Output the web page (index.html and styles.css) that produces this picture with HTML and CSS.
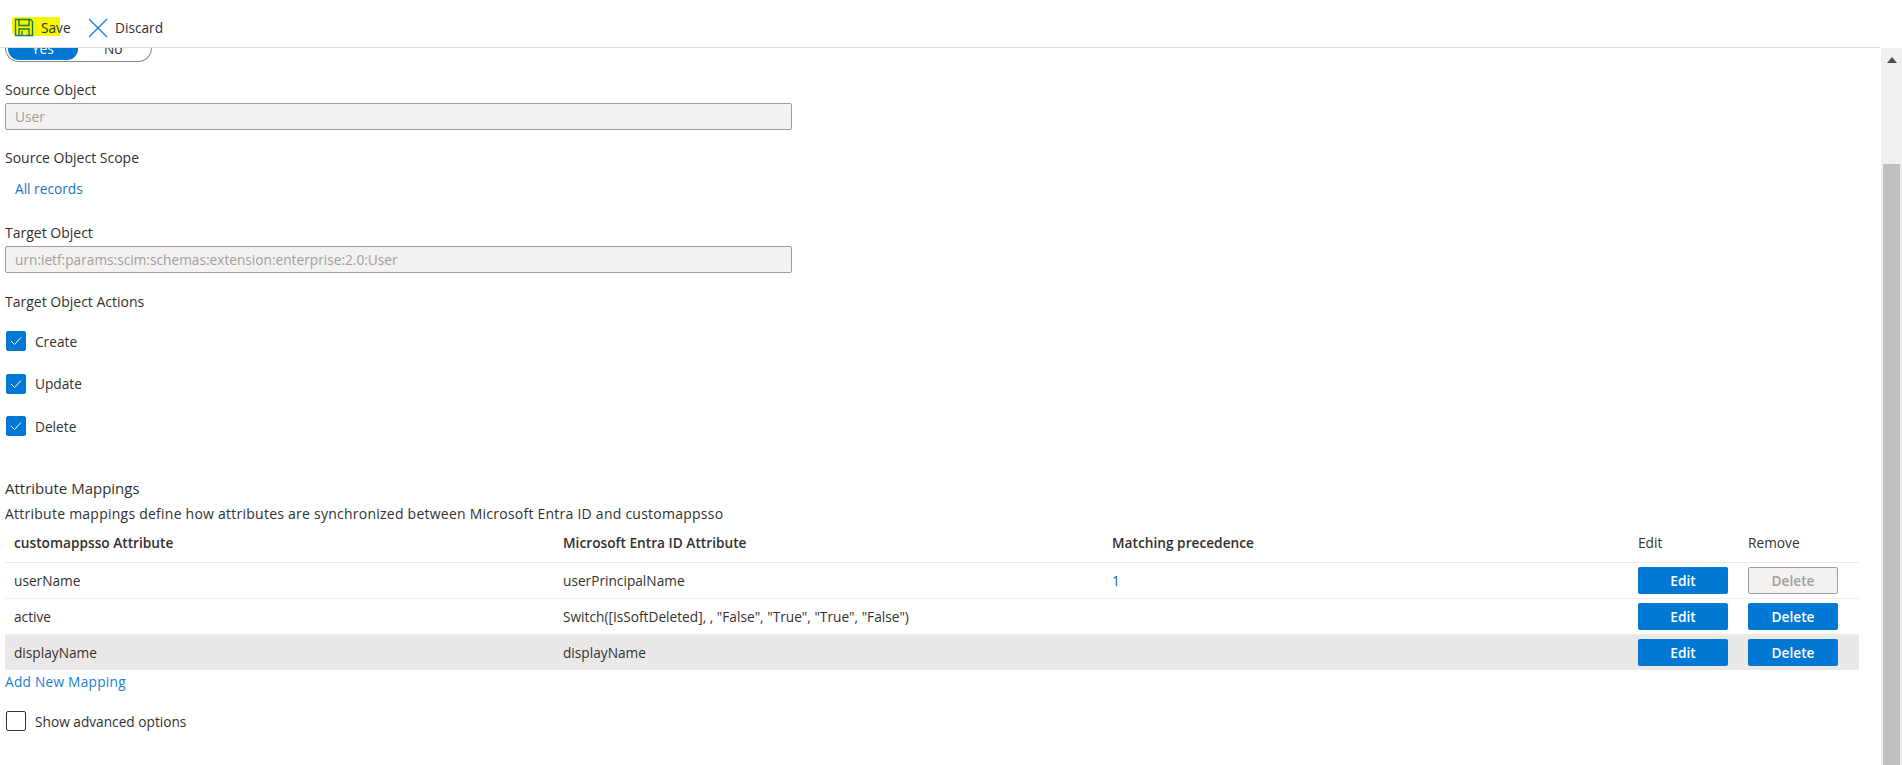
FILE: index.html
```html
<!DOCTYPE html>
<html lang="en">
<head>
<meta charset="utf-8">
<title>Attribute Mapping</title>
<link rel="stylesheet" href="styles.css">
</head>
<body>
<div class="page">
  <header class="cmdbar">
    <button class="cmd cmd-save">
      <svg class="ico" width="20" height="19" viewBox="0 0 20 19"><path d="M1.500 1.500H16.500L18.500 3.500V17.500H1.500Z M5 1.500V7.500H15V1.500 M5 17.500V11H15V17.500 M8 13V17.500" fill="none" stroke="#14813a" stroke-width="1.400"/></svg>
      <span class="cmd-label">Save</span>
    </button>
    <button class="cmd cmd-discard">
      <svg class="ico" width="20" height="20" viewBox="0 0 20 20"><path d="M1 1L19 19M19 1L1 19" fill="none" stroke="#1a82d8" stroke-width="1.400"/></svg>
      <span class="cmd-label">Discard</span>
    </button>
  </header>
  <div class="body-row">
    <main class="content">
      <div class="toggle-clip">
        <div class="toggle"><span class="toggle-on">Yes</span><span class="toggle-off">No</span></div>
      </div>
      <div class="label l-source">Source Object</div>
      <div class="input">User</div>
      <div class="label l-scope">Source Object Scope</div>
      <a class="link l-all">All records</a>
      <div class="label l-target">Target Object</div>
      <div class="input">urn:ietf:params:scim:schemas:extension:enterprise:2.0:User</div>
      <div class="label l-actions">Target Object Actions</div>
      <div class="checks">
        <label class="check"><span class="box on"><svg width="12" height="10" viewBox="0 0 12 10"><path d="M1 5L4.500 8.500L11 1.500" fill="none" stroke="#fff" stroke-width="1"/></svg></span>Create</label>
        <label class="check"><span class="box on"><svg width="12" height="10" viewBox="0 0 12 10"><path d="M1 5L4.500 8.500L11 1.500" fill="none" stroke="#fff" stroke-width="1"/></svg></span>Update</label>
        <label class="check"><span class="box on"><svg width="12" height="10" viewBox="0 0 12 10"><path d="M1 5L4.500 8.500L11 1.500" fill="none" stroke="#fff" stroke-width="1"/></svg></span>Delete</label>
      </div>
      <div class="section-title">Attribute Mappings</div>
      <div class="section-desc">Attribute mappings define how attributes are synchronized between Microsoft Entra ID and customappsso</div>
      <table class="grid">
        <colgroup><col class="c1"><col class="c2"><col class="c3"><col class="c4"><col class="c5"></colgroup>
        <thead>
          <tr><th class="strong">customappsso Attribute</th><th class="strong">Microsoft Entra ID Attribute</th><th class="mid">Matching precedence</th><th>Edit</th><th>Remove</th></tr>
        </thead>
        <tbody>
          <tr><td>userName</td><td>userPrincipalName</td><td class="num">1</td><td><button class="btn">Edit</button></td><td><button class="btn off">Delete</button></td></tr>
          <tr><td>active</td><td>Switch([IsSoftDeleted], , "False", "True", "True", "False")</td><td></td><td><button class="btn">Edit</button></td><td><button class="btn">Delete</button></td></tr>
          <tr class="hover"><td>displayName</td><td>displayName</td><td></td><td><button class="btn">Edit</button></td><td><button class="btn">Delete</button></td></tr>
        </tbody>
      </table>
      <a class="link l-add">Add New Mapping</a>
      <label class="check adv"><span class="box"></span>Show advanced options</label>
    </main>
    <aside class="scrollbar">
      <svg class="arrow" width="10" height="6" viewBox="0 0 10 6"><path d="M5 0L10 6H0Z" fill="#505050"/></svg>
      <div class="thumb"></div>
    </aside>
  </div>
</div>
</body>
</html>
```

FILE: styles.css
```css
* { box-sizing: border-box; }
html, body { margin: 0; height: 100%; overflow: hidden; background: #fff; }
body { font-family: "Open Sans", "Noto Sans", sans-serif; font-size: 13.700px; color: #323130; }
.page { width: 1902px; height: 765px; display: flex; flex-direction: column; }
.cmdbar { width: 1880px; height: 48px; flex: none; border-bottom: 1px solid #d9d9d9; display: flex; align-items: flex-start; padding: 18px 0 0 14px; }
.cmd { display: flex; align-items: center; border: 0; background: none; padding: 0; font: inherit; color: #323130; height: 19px; }
.cmd-save { width: 74px; position: relative; }
.cmd-save::before { content: ""; position: absolute; left: -2px; top: -1px; width: 48px; height: 17px; background: #f6f600; border-radius: 2px; }
.cmd-save::after { content: ""; position: absolute; left: 12px; top: 14px; width: 34px; height: 4px; background: #f6f600; }
.cmd .ico, .cmd-label { position: relative; z-index: 1; }
.cmd-save .cmd-label { margin-left: 7px; }
.cmd-discard .cmd-label { margin-left: 7px; }
.body-row { flex: 1; min-height: 0; display: flex; }
.content { width: 1881px; flex: none; padding-left: 5px; overflow: hidden; }
.toggle-clip { height: 14px; overflow: hidden; display: flex; align-items: flex-end; }
.toggle { width: 147px; height: 30px; flex: none; border: 1px solid #8a8886; border-radius: 0 0 14px 14px; border-top: 0; display: flex; padding: 0 2px 2px 2px; }
.toggle-on { width: 71px; background: #0078d4; color: #fff; border-radius: 0 0 11px 11px; text-align: center; line-height: 34px; height: 28px; overflow: hidden; }
.toggle-off { width: 73px; text-align: center; line-height: 34px; height: 28px; overflow: hidden; }
.label { height: 18px; line-height: 18px; font-size: 14px; }
.l-source { margin-top: 19px; }
.input { width: 787px; height: 27px; margin-top: 4px; border: 1px solid #a19f9d; border-radius: 2px; background: #f3f2f1; color: #a19f9d; line-height: 25px; padding-left: 9px; }
.l-scope { margin-top: 19px; }
.link { display: block; height: 18px; line-height: 18px; }
.l-all { margin: 13px 0 0 10px; color: #1a73c8; }
.l-target { margin-top: 26px; }
.l-actions { margin-top: 20px; }
.checks { margin-top: 20px; display: flex; flex-direction: column; gap: 22.500px; }
.check { display: flex; align-items: center; height: 20px; }
.box { width: 20px; height: 20px; margin: 0 9px 0 1px; border-radius: 2px; border: 1px solid #323130; display: flex; align-items: center; justify-content: center; flex: none; }
.box.on { background: #0078d4; border-color: #0078d4; }
.section-title { margin-top: 43px; height: 18px; line-height: 18px; font-size: 15px; }
.section-desc { margin-top: 8px; height: 18px; line-height: 18px; font-size: 14px; letter-spacing: 0.240px; }
.grid { width: 1854px; table-layout: fixed; border-collapse: collapse; }
.c1, .c2 { width: 549px; }
.c3 { width: 526px; }
.c4 { width: 110px; }
.c5 { width: 120px; }
.grid th { height: 39px; text-align: left; font-weight: 400; padding: 0 0 0 9px; border-bottom: 1px solid #edebe9; }
.grid th.strong, .grid th.mid { font-weight: 600; }
.grid td { height: 36px; padding: 0 0 0 9px; border-bottom: 1px solid #f0efee; }
.grid tr.hover td { background: #ebe9e7; border-bottom: 0; }
.num { color: #1a5fa8; }
.btn { display: block; width: 90px; height: 27px; border: 0; border-radius: 2px; background: #0078d4; color: #fff; font: 600 13.700px "Open Sans", "Noto Sans", sans-serif; padding: 0; }
.btn.off { background: #f3f2f1; border: 1px solid #a19f9d; color: #a19f9d; }
.l-add { margin-top: 3px; color: #1a7fd4; letter-spacing: 0.250px; }
.adv { margin-top: 20px; }
.scrollbar { width: 21px; flex: none; background: #f0f0f0; display: flex; flex-direction: column; align-items: center; }
.arrow { margin-top: 9px; flex: none; }
.thumb { width: 17px; margin-top: 101px; flex: 1; background: #c0c0c0; }
```
